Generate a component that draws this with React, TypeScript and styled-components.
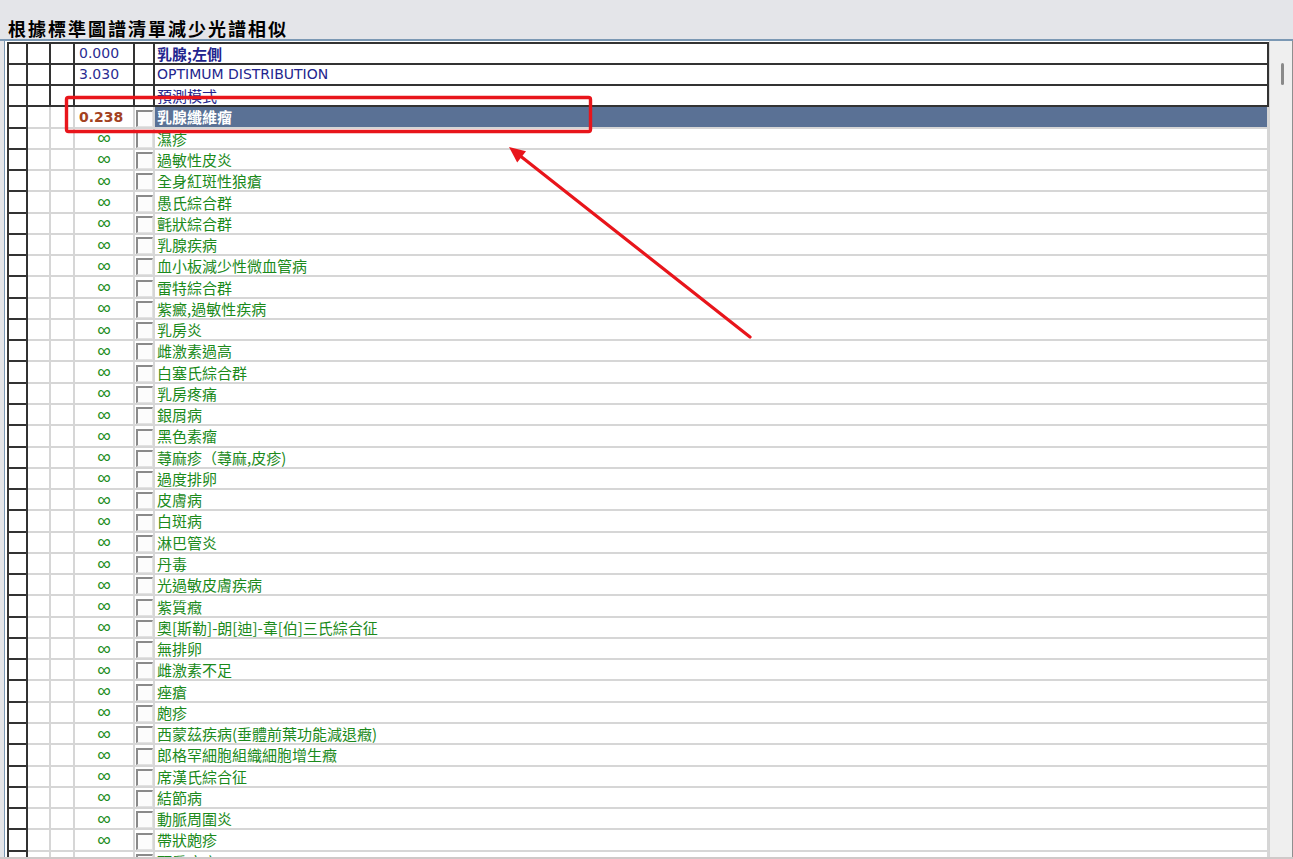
import React from 'react';
import styled, { createGlobalStyle, css } from 'styled-components';

const GlobalStyle = createGlobalStyle`
  html, body { margin: 0; padding: 0; background: #e4e5e9; }
  body { width: 1293px; height: 859px; overflow: hidden; font-family: "Noto Sans CJK TC", sans-serif; }
`;

const ROW_H = 21.27;
const DARK = '#333333';
const LIGHT = '#d6d6d6';

const Page = styled.div`
  position: relative;
  width: 1293px;
  height: 859px;
  overflow: hidden;
  display: flex;
  flex-direction: column;
  background: #e4e5e9;
  box-sizing: border-box;
  border-bottom: 2px solid #cfc9c9;
`;

const TitleBar = styled.div`
  height: 39px;
  flex: none;
  box-sizing: border-box;
  padding: 17px 0 0 8px;
`;

const Title = styled.h1`
  margin: 0;
  font: 700 18px/22px "Noto Sans CJK TC", sans-serif;
  letter-spacing: 2px;
  color: #000;
`;

const Body = styled.div`
  flex: 1;
  min-height: 0;
  display: flex;
  border-top: 2px solid #7b98b4;
`;

const Gutter = styled.div`
  width: 4px;
  flex: none;
`;

const GridFrame = styled.div`
  flex: 1;
  min-width: 0;
  background: #fff;
  border-left: 1px solid #7b98b4;
  padding: 0.5px 0 0 2px;
  overflow: hidden;
`;

const Row = styled.div<{ $first?: boolean }>`
  display: grid;
  grid-template-columns: 21px 23px 24px 60px 20px 1fr;
  height: ${(p) => (p.$first ? ROW_H + 2 : ROW_H)}px;
`;

const Cell = styled.div<{ $dark?: boolean; $first?: boolean; $top?: boolean; $sel?: boolean }>`
  box-sizing: border-box;
  min-width: 0;
  overflow: hidden;
  border-right: 2px solid ${(p) => (p.$dark ? DARK : LIGHT)};
  border-bottom: 2px solid ${(p) => (p.$dark ? DARK : LIGHT)};
  ${(p) => p.$first && css`border-left: 2px solid ${DARK};`}
  ${(p) => p.$top && css`border-top: 2px solid ${DARK};`}
  background: ${(p) => (p.$sel ? '#5a7195' : '#fff')};
  display: flex;
  align-items: center;
`;

const ValueCell = styled(Cell)<{ $kind: 'num' | 'sel' | 'inf' }>`
  padding-left: ${(p) => (p.$kind === 'inf' ? '0' : '4px')};
  justify-content: ${(p) => (p.$kind === 'inf' ? 'center' : 'flex-start')};
  font-family: ${(p) => (p.$kind === 'inf' ? '"Liberation Sans"' : '"DejaVu Sans"')}, sans-serif;
  font-size: ${(p) => (p.$kind === 'inf' ? '19px' : '14px')};
  font-weight: ${(p) => (p.$kind === 'sel' ? 700 : 400)};
  color: ${(p) => (p.$kind === 'sel' ? '#a3421f' : p.$kind === 'inf' ? '#1a8c1a' : '#2a2c92')};
  white-space: nowrap;
`;

const BoxCell = styled(Cell)`
  align-items: flex-end;
  padding-left: 1px;
`;

const CheckBox = styled.div`
  width: 17px;
  height: 17px;
  box-sizing: border-box;
  background: #fcfcfc;
  border-top: 2px solid #8a8a8a;
  border-left: 2px solid #8a8a8a;
  border-right: 1px solid #e2e2e2;
  border-bottom: 1px solid #e2e2e2;
`;

const NameCell = styled(Cell)<{ $tone: 'navy' | 'green' | 'white'; $bold?: boolean }>`
  padding-left: 2px;
  font-family: "Noto Sans CJK TC", sans-serif;
  font-size: 15px;
  font-weight: ${(p) => (p.$bold ? 700 : 400)};
  color: ${(p) => (p.$tone === 'navy' ? '#23258e' : p.$tone === 'white' ? '#ffffff' : '#1b8a1b')};
  white-space: nowrap;
`;

const Latin = styled.span`
  font-family: "DejaVu Sans", sans-serif;
  font-size: 14px;
`;

const Scrollbar = styled.div`
  width: 24px;
  flex: none;
  box-sizing: border-box;
  background: #efefef;
  border-left: 1px solid #d4d4d4;
  border-right: 1px solid #8f8f8f;
  padding: 22px 0 0 11px;
`;

const Thumb = styled.div`
  width: 3px;
  height: 22px;
  border-radius: 2px;
  background: #8a8a8a;
`;

const Overlay = styled.svg`
  position: absolute;
  left: 0;
  top: 0;
  pointer-events: none;
`;

type RowData = {
  value: string;
  kind: 'num' | 'sel' | 'inf' | 'none';
  name: string;
  tone: 'navy' | 'green' | 'white';
  bold?: boolean;
  head?: boolean;
  sel?: boolean;
  box?: boolean;
  latin?: boolean;
};

const greens = [
  '濕疹', '過敏性皮炎', '全身紅斑性狼瘡', '愚氏綜合群', '氈狀綜合群', '乳腺疾病',
  '血小板減少性微血管病', '雷特綜合群', '紫癜,過敏性疾病', '乳房炎', '雌激素過高',
  '白塞氏綜合群', '乳房疼痛', '銀屑病', '黑色素瘤', '蕁麻疹（蕁麻,皮疹)', '過度排卵',
  '皮膚病', '白斑病', '淋巴管炎', '丹毒', '光過敏皮膚疾病', '紫質癥',
  '奧[斯勒]-朗[迪]-韋[伯]三氏綜合征', '無排卵', '雌激素不足', '痤瘡', '皰疹',
  '西蒙茲疾病(垂體前葉功能減退癥)', '郎格罕細胞組織細胞增生癥', '席漢氏綜合征',
  '結節病', '動脈周圍炎', '帶狀皰疹', '頸肩疼痛',
];

const rows: RowData[] = [
  { value: '0.000', kind: 'num', name: '乳腺;左側', tone: 'navy', bold: true, head: true },
  { value: '3.030', kind: 'num', name: 'OPTIMUM DISTRIBUTION', tone: 'navy', head: true, latin: true },
  { value: '', kind: 'none', name: '預測模式', tone: 'navy', head: true },
  { value: '0.238', kind: 'sel', name: '乳腺纖維瘤', tone: 'white', bold: true, sel: true, box: true },
  ...greens.map((g) => ({ value: '∞', kind: 'inf' as const, name: g, tone: 'green' as const, box: true })),
];

export default function App() {
  return (
    <>
      <GlobalStyle />
      <Page>
        <TitleBar>
          <Title>根據標準圖譜清單減少光譜相似</Title>
        </TitleBar>
        <Body>
          <Gutter />
          <GridFrame>
            {rows.map((r, i) => {
              const top = i === 0;
              const d = !!r.head;
              return (
                <Row key={i} $first={top}>
                  <Cell $dark $first $top={top} />
                  <Cell $dark={d} $top={top} />
                  <Cell $dark={d} $top={top} />
                  <ValueCell $dark={d} $top={top} $kind={r.kind === 'none' ? 'num' : r.kind}>
                    {r.value}
                  </ValueCell>
                  <BoxCell $dark={d} $top={top}>{r.box && <CheckBox />}</BoxCell>
                  <NameCell $dark={d} $top={top} $sel={r.sel} $tone={r.tone} $bold={r.bold}>
                    {r.latin ? <Latin>{r.name}</Latin> : r.name}
                  </NameCell>
                </Row>
              );
            })}
          </GridFrame>
          <Scrollbar>
            <Thumb />
          </Scrollbar>
        </Body>
        <Overlay width="1293" height="859" viewBox="0 0 1293 859">
          <rect x="66.5" y="97.5" width="524" height="34" rx="2" fill="none" stroke="#e8151b" strokeWidth="3.4" />
          <line x1="750" y1="337" x2="521" y2="156.5" stroke="#e8151b" strokeWidth="3.2" strokeLinecap="round" />
          <polygon points="509,147 526,151.2 517.2,162.6" fill="#e8151b" />
        </Overlay>
      </Page>
    </>
  );
}
